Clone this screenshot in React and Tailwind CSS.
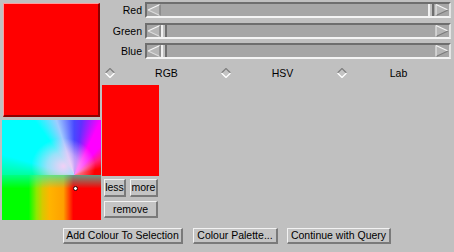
import React from 'react';

const sliders = [
  { label: 'Red', end: true },
  { label: 'Green', end: false },
  { label: 'Blue', end: false },
];

function LeftArrow() {
  return (
    <svg width="14" height="12" viewBox="0 0 14 12" className="shrink-0">
      <polygon points="13,0.5 1,6 13,11.5" fill="#b6b6b6" />
      <line x1="13" y1="0.5" x2="1" y2="6" stroke="#f4f4f4" strokeWidth="1.2" />
      <line x1="1" y1="6" x2="13" y2="11.5" stroke="#dcdcdc" strokeWidth="1.2" />
      <line x1="13" y1="0.5" x2="13" y2="11.5" stroke="#7c7c7c" strokeWidth="1.2" />
    </svg>
  );
}

function RightArrow() {
  return (
    <svg width="14" height="12" viewBox="0 0 14 12" className="shrink-0">
      <polygon points="1,0.5 13,6 1,11.5" fill="#b6b6b6" />
      <line x1="1" y1="0.5" x2="13" y2="6" stroke="#f4f4f4" strokeWidth="1.2" />
      <line x1="13" y1="6" x2="1" y2="11.5" stroke="#7c7c7c" strokeWidth="1.2" />
      <line x1="1" y1="0.5" x2="1" y2="11.5" stroke="#e8e8e8" strokeWidth="1.2" />
    </svg>
  );
}

function Thumb() {
  return <div className="w-[6px] h-[12px] shrink-0 bg-[#c0c0c0] border-l-2 border-l-[#f0f0f0] border-r-2 border-r-[#6e6e6e]" />;
}

function Diamond() {
  return (
    <svg width="10" height="10" viewBox="0 0 10 10" className="shrink-0">
      <polygon points="5,0.5 9.5,5 5,9.5 0.5,5" fill="#c4c4c4" />
      <polyline points="0.5,5 5,0.5 9.5,5" fill="none" stroke="#808080" strokeWidth="1.3" />
      <polyline points="0.5,5 5,9.5 9.5,5" fill="none" stroke="#ffffff" strokeWidth="1.3" />
    </svg>
  );
}

function Btn({ children, className }) {
  return (
    <div className={`flex items-center justify-center whitespace-nowrap leading-none bg-[#c4c4c4] border-t border-l border-[#f2f2f2] border-b-2 border-r-2 border-b-[#7a7a7a] border-r-[#7a7a7a] ${className}`}>
      {children}
    </div>
  );
}

export default function App() {
  return (
    <div className="w-[454px] h-[252px] overflow-hidden bg-[#c0c0c0] text-black text-[10.5px] font-['Liberation_Sans',Arial,sans-serif] flex flex-col">
      <div className="flex pt-[2px] pl-[2px]">
        {/* colour swatch + chooser map */}
        <div className="w-[99px] flex flex-col">
          <div className="ml-[1px] mt-[1px] w-[97px] h-[114px] bg-[#ff0000] border-t border-l border-[#ff9c9c] border-b-2 border-r-2 border-b-[#8c0000] border-r-[#8c0000]" />
          <div className="mt-[3px] w-[99px] h-[100px] relative flex flex-col">
            <div className="h-[55px] bg-[radial-gradient(ellipse_32px_28px_at_62%_84%,rgba(255,205,245,0.95)_0px,rgba(255,205,245,0.6)_50%,rgba(255,205,245,0)_100%),conic-gradient(from_0deg_at_73%_100%,#4848ff_0deg,#6030ff_8deg,#ff00ff_26deg,#ff00ff_42deg,#ff2080_58deg,#ff0000_76deg,#ff0000_250deg,#00ffa0_270deg,#00ffff_286deg,#00ffff_324deg,#a0ccff_342deg,#4848ff_360deg)]" />
            <div className="flex-1 bg-[linear-gradient(to_bottom,rgba(0,255,220,0.6),rgba(0,255,220,0)_30%),linear-gradient(to_right,#00ff00_0%,#00ff00_27%,#90e800_35%,#d8c800_41%,#ffb400_48%,#ffa000_62%,#ff4000_68%,#ff0000_72%,#ff0000_100%)]" />
            <div className="absolute left-[71px] top-[66px] w-[5px] h-[5px] rounded-full bg-white border border-[#300000]" />
          </div>
        </div>

        {/* sliders, model choice, preview */}
        <div className="ml-[1px] w-[349px] flex flex-col">
          {sliders.map((s, i) => (
            <div key={s.label} className={`flex items-center h-[16px] ${i === 1 ? 'mt-[5px]' : i === 2 ? 'mt-[4px]' : ''}`}>
              <div className="w-[40px] text-right leading-none">{s.label}</div>
              <div className="ml-[3px] w-[306px] h-[16px] flex items-center bg-[#a6a6a6] border-t-2 border-l-2 border-[#6e6e6e] border-b-2 border-b-[#f4f4f4] border-r-2 border-r-[#e4e4e4]">
                <LeftArrow />
                {s.end ? (
                  <>
                    <div className="flex-1" />
                    <Thumb />
                    <div className="w-[1px]" />
                  </>
                ) : (
                  <>
                    <Thumb />
                    <div className="flex-1" />
                  </>
                )}
                <RightArrow />
              </div>
            </div>
          ))}

          <div className="mt-[6px] h-[16px] flex">
            {['RGB', 'HSV', 'Lab'].map(m => (
              <div key={m} className="w-[116px] flex items-center">
                <div className="ml-[3px]"><Diamond /></div>
                <div className="flex-1 text-center leading-none">{m}</div>
              </div>
            ))}
          </div>

          <div className="mt-[4px] w-[57px] h-[91px] bg-[#ff0000]" />
          <div className="mt-[3px] ml-[2px] flex gap-[4px]">
            <Btn className="w-[22px] h-[18px]">less</Btn>
            <Btn className="w-[28px] h-[18px]">more</Btn>
          </div>
          <Btn className="mt-[4px] ml-[2px] w-[54px] h-[17px]">remove</Btn>
        </div>
      </div>

      <div className="mt-[8px] flex justify-center">
        <Btn className="w-[120px] h-[16px] mr-[10px]">Add Colour To Selection</Btn>
        <Btn className="w-[85px] h-[16px] mr-[9px]">Colour Palette...</Btn>
        <Btn className="w-[104px] h-[16px]">Continue with Query</Btn>
      </div>
    </div>
  );
}
